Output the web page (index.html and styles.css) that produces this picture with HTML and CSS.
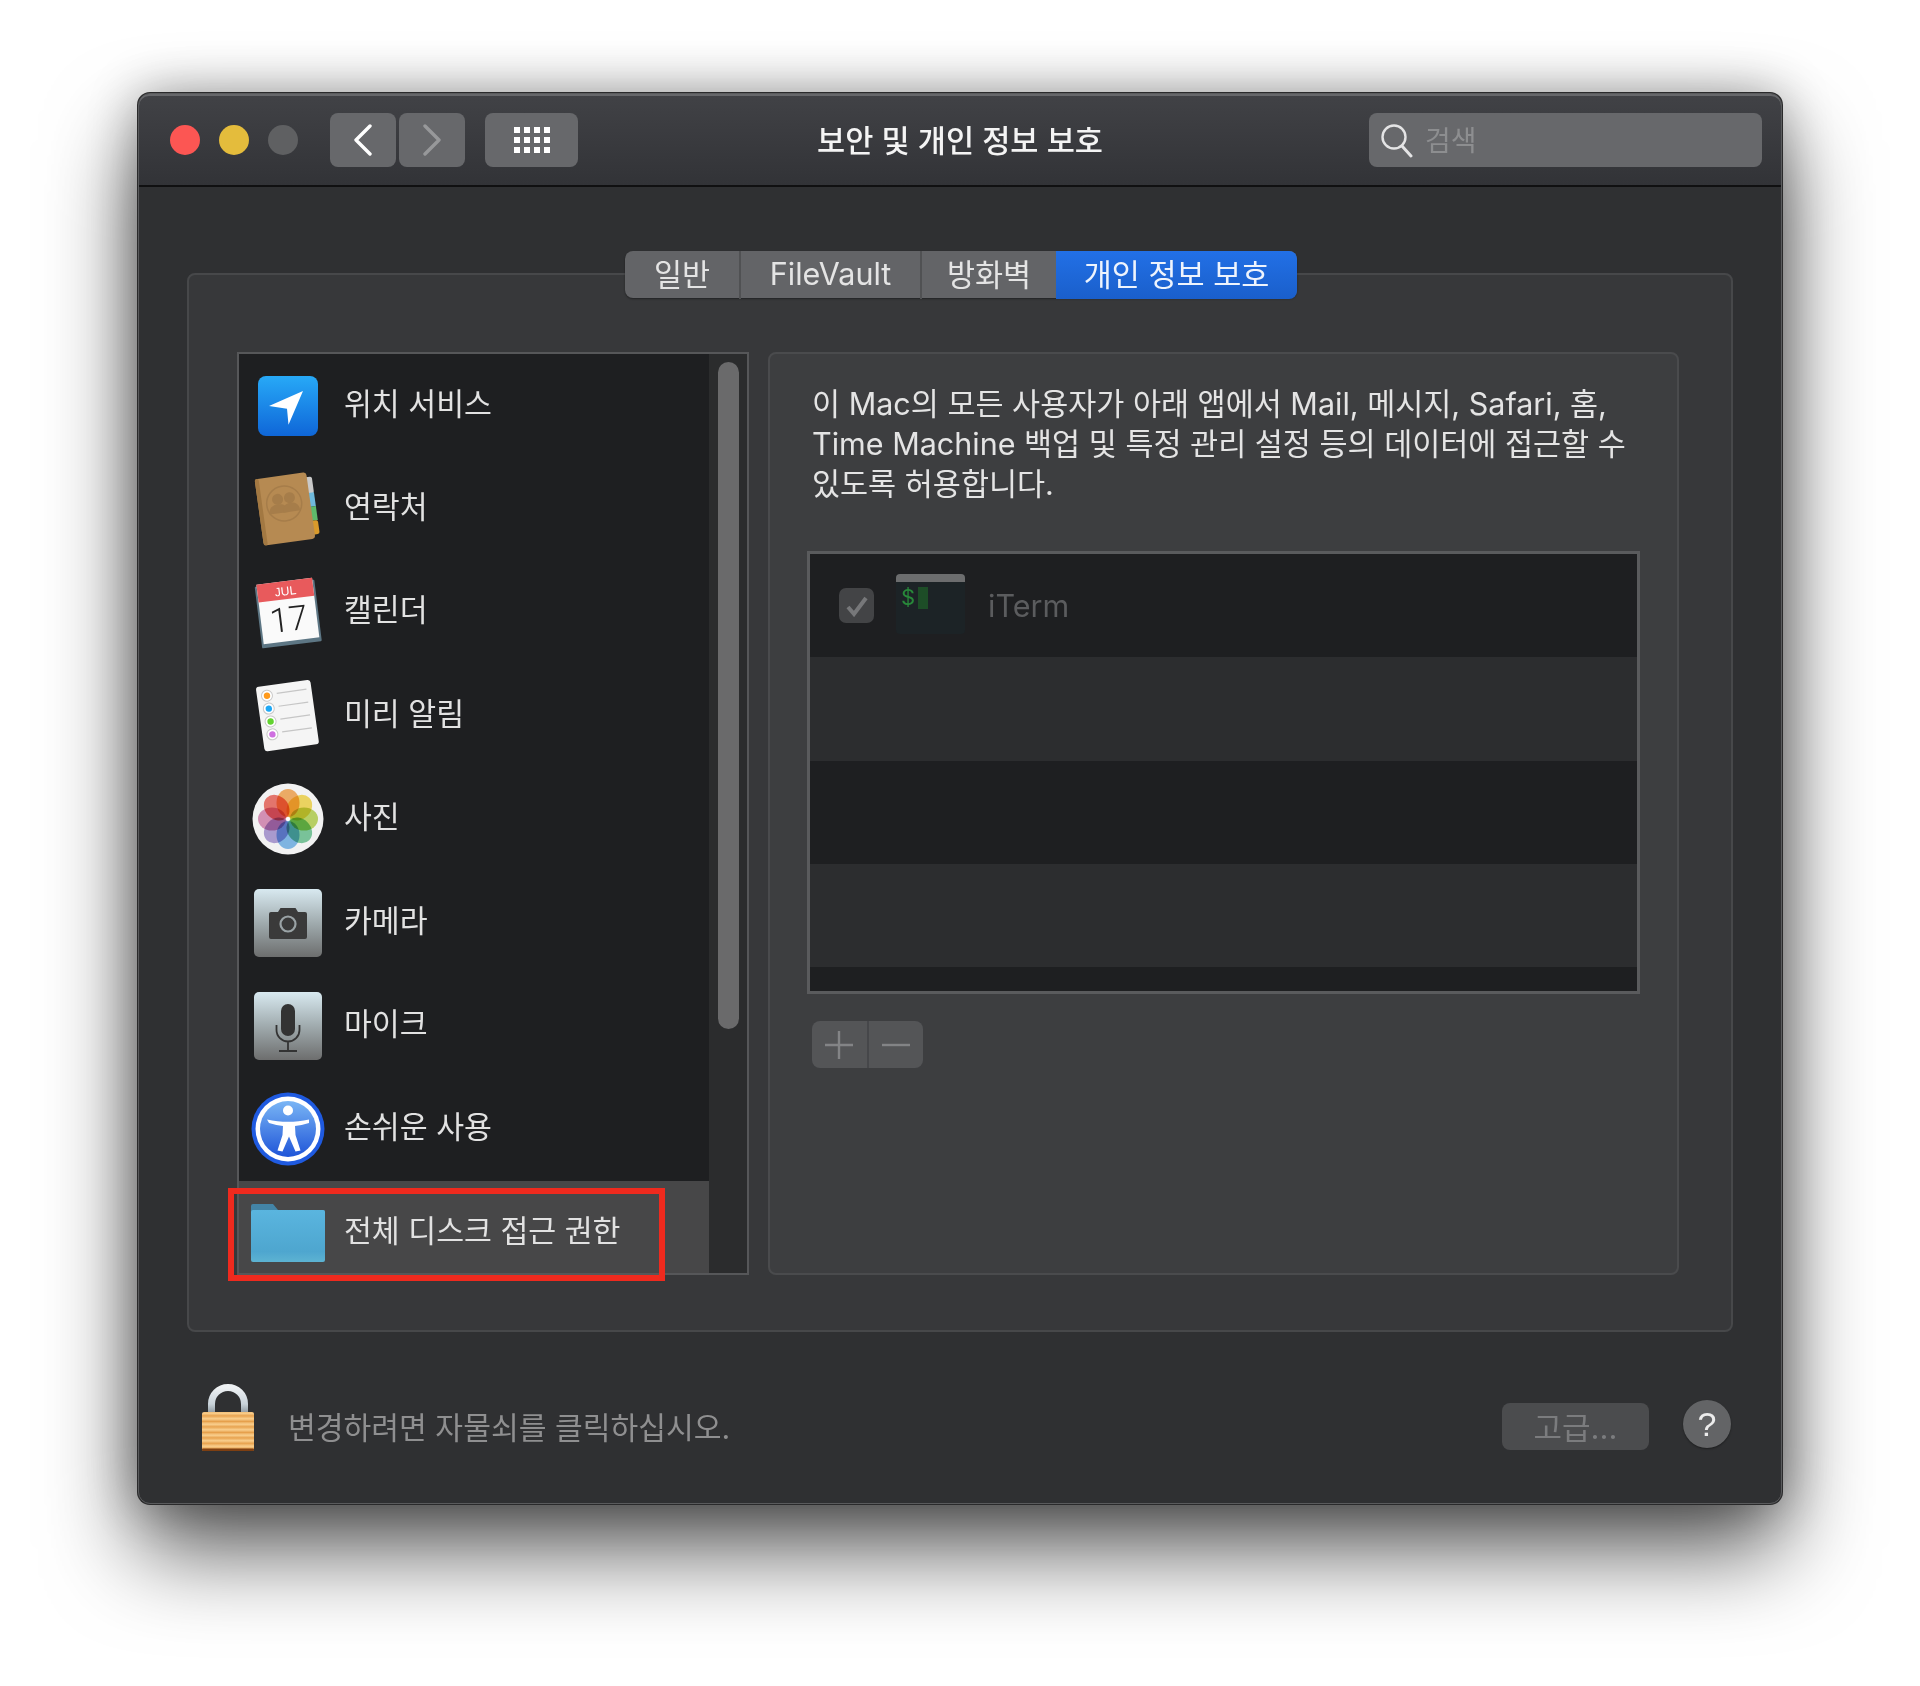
FILE: index.html
```html
<!DOCTYPE html>
<html lang="ko">
<head>
    <meta charset="UTF-8">
    <meta name="viewport" content="width=device-width, initial-scale=1.0">
    <title>보안 및 개인 정보 보호</title>
    <link rel="stylesheet" href="styles.css">
</head>
<body>
    <div class="window">
        <header class="titlebar">
            <div class="lights">
                <span class="light red"></span>
                <span class="light yellow"></span>
                <span class="light gray"></span>
            </div>
            <div class="nav">
                <button class="tool-btn nav-btn">
                    <svg width="20" height="32" viewBox="0 0 20 32"><path d="M17 2 3 16l14 14" fill="none" stroke="#fff" stroke-width="3.4" stroke-linecap="round" stroke-linejoin="round"/></svg>
                </button>
                <button class="tool-btn nav-btn">
                    <svg width="20" height="32" viewBox="0 0 20 32"><path d="M3 2l14 14L3 30" fill="none" stroke="#97989a" stroke-width="3.4" stroke-linecap="round" stroke-linejoin="round"/></svg>
                </button>
            </div>
            <button class="tool-btn grid-btn">
                <svg width="36" height="26" viewBox="0 0 36 26" fill="#fff">
                    <rect x="0" y="0" width="6" height="6"/><rect x="10" y="0" width="6" height="6"/><rect x="20" y="0" width="6" height="6"/><rect x="30" y="0" width="6" height="6"/>
                    <rect x="0" y="10" width="6" height="6"/><rect x="10" y="10" width="6" height="6"/><rect x="20" y="10" width="6" height="6"/><rect x="30" y="10" width="6" height="6"/>
                    <rect x="0" y="20" width="6" height="6"/><rect x="10" y="20" width="6" height="6"/><rect x="20" y="20" width="6" height="6"/><rect x="30" y="20" width="6" height="6"/>
                </svg>
            </button>
            <h1 class="title">보안 및 개인 정보 보호</h1>
            <div class="search">
                <svg width="34" height="36" viewBox="0 0 34 36"><circle cx="14" cy="15" r="11.5" fill="none" stroke="#e4e4e5" stroke-width="2.4"/><path d="M22 24l9 10" stroke="#e4e4e5" stroke-width="3" stroke-linecap="round"/></svg>
                <span>검색</span>
            </div>
        </header>

        <main class="content">
            <section class="box">
                <nav class="tabs">
                    <a class="tab">일반</a>
                    <a class="tab">FileVault</a>
                    <a class="tab">방화벽</a>
                    <a class="tab active">개인 정보 보호</a>
                </nav>

                <div class="columns">
                    <div class="list-wrap">
                        <div class="list">
                            <ul class="rows">
                                <li class="row">
                                    <svg class="app-icon" viewBox="0 0 76 76">
                                        <defs><linearGradient id="locBg" x1="0" y1="0" x2="0" y2="1"><stop offset="0" stop-color="#27a9f7"/><stop offset="1" stop-color="#0f66d8"/></linearGradient></defs>
                                        <rect x="8" y="8" width="60" height="60" rx="8" fill="url(#locBg)"/>
                                        <path d="M53 23 19 38l18 2.700 1.500 16z" fill="#fff"/>
                                    </svg>
                                    <span>위치 서비스</span>
                                </li>
                                <li class="row">
                                    <svg class="app-icon" viewBox="0 0 76 76">
                                        <g transform="rotate(-8 38 38)">
                                            <rect x="58" y="9" width="8" height="17" rx="2" fill="#c9c9c9"/>
                                            <rect x="58" y="25" width="8" height="14" fill="#6fb9dc"/>
                                            <rect x="58" y="39" width="8" height="14" fill="#5dbb6b"/>
                                            <rect x="58" y="53" width="8" height="14" rx="2" fill="#d99a2b"/>
                                            <rect x="9" y="4" width="52" height="67" rx="3" fill="#b68a52"/>
                                            <rect x="9" y="4" width="4" height="67" rx="2" fill="#a27842"/>
                                            <circle cx="35" cy="32" r="17.500" fill="none" stroke="#a67d4a" stroke-width="1.500"/>
                                            <g fill="#a67d4a">
                                                <circle cx="29" cy="27" r="5.500"/><path d="M19 41c0-7 5-9 10-9s9 2 9 9z"/>
                                                <circle cx="41" cy="27" r="5.500"/><path d="M33 41c0-7 4-9 8-9s9 2 9 9z"/>
                                            </g>
                                        </g>
                                    </svg>
                                    <span>연락처</span>
                                </li>
                                <li class="row">
                                    <svg class="app-icon" viewBox="0 0 76 76">
                                        <g transform="rotate(-7 38 38)">
                                            <rect x="8" y="9" width="60" height="62" rx="1" fill="#5d7684"/>
                                            <rect x="10" y="7" width="56" height="60" fill="#fafafa"/>
                                            <rect x="10" y="7" width="56" height="18" fill="#e85a5c"/>
                                            <text class="cal-month" x="38" y="21" text-anchor="middle">JUL</text>
                                            <text class="cal-day" x="38" y="57" text-anchor="middle">17</text>
                                        </g>
                                    </svg>
                                    <span>캘린더</span>
                                </li>
                                <li class="row">
                                    <svg class="app-icon" viewBox="0 0 76 76">
                                        <g transform="rotate(-8 38 38)">
                                            <rect x="10" y="5" width="55" height="65" rx="3" fill="#f5f5f5"/>
                                            <g stroke="#c6c6c6" stroke-width="1.200">
                                                <path d="M30 14h30M30 27h30M30 40h30M30 53h30"/>
                                            </g>
                                            <g stroke="#c8c8c8" stroke-width="1" fill="#fff">
                                                <circle cx="20" cy="15" r="5.500"/><circle cx="20" cy="28" r="5.500"/><circle cx="20" cy="41" r="5.500"/><circle cx="20" cy="54" r="5.500"/>
                                            </g>
                                            <circle cx="20" cy="15" r="3.200" fill="#ff9a1c"/>
                                            <circle cx="20" cy="28" r="3.200" fill="#1ea8f5"/>
                                            <circle cx="20" cy="41" r="3.200" fill="#62d330"/>
                                            <circle cx="20" cy="54" r="3.200" fill="#cf6fe0"/>
                                        </g>
                                    </svg>
                                    <span>미리 알림</span>
                                </li>
                                <li class="row">
                                    <svg class="app-icon" viewBox="0 0 76 76">
                                        <circle cx="38" cy="38" r="35.500" fill="#f2f2f2"/>
                                        <ellipse class="petal" cx="38" cy="22" rx="11.500" ry="14" fill="#f7a650"/>
                                        <ellipse class="petal" cx="38" cy="22" rx="11.500" ry="14" fill="#f6d84a" transform="rotate(45 38 38)"/>
                                        <ellipse class="petal" cx="38" cy="22" rx="11.500" ry="14" fill="#b6d44e" transform="rotate(90 38 38)"/>
                                        <ellipse class="petal" cx="38" cy="22" rx="11.500" ry="14" fill="#69c490" transform="rotate(135 38 38)"/>
                                        <ellipse class="petal" cx="38" cy="22" rx="11.500" ry="14" fill="#70b3ea" transform="rotate(180 38 38)"/>
                                        <ellipse class="petal" cx="38" cy="22" rx="11.500" ry="14" fill="#a592d3" transform="rotate(225 38 38)"/>
                                        <ellipse class="petal" cx="38" cy="22" rx="11.500" ry="14" fill="#d885b3" transform="rotate(270 38 38)"/>
                                        <ellipse class="petal" cx="38" cy="22" rx="11.500" ry="14" fill="#ee6459" transform="rotate(315 38 38)"/>
                                        <circle cx="38" cy="38" r="1.800" fill="#fff"/>
                                    </svg>
                                    <span>사진</span>
                                </li>
                                <li class="row">
                                    <svg class="app-icon" viewBox="0 0 76 76">
                                        <defs><linearGradient id="metal" x1="0" y1="0" x2="0" y2="1"><stop offset="0" stop-color="#d8e9f0"/><stop offset="0.500" stop-color="#a0abae"/><stop offset="1" stop-color="#6d6e6e"/></linearGradient></defs>
                                        <rect x="4" y="4" width="68" height="68" rx="5" fill="url(#metal)"/>
                                        <path d="M21 27h7l2.500-4h15l2.500 4h7a2 2 0 0 1 2 2v23a2 2 0 0 1-2 2H21a2 2 0 0 1-2-2V29a2 2 0 0 1 2-2z" fill="#3a3a3a"/>
                                        <circle cx="38" cy="39" r="7.500" fill="none" stroke="#9aa3a6" stroke-width="2.200"/>
                                    </svg>
                                    <span>카메라</span>
                                </li>
                                <li class="row">
                                    <svg class="app-icon" viewBox="0 0 76 76">
                                        <rect x="4" y="4" width="68" height="68" rx="5" fill="url(#metal)"/>
                                        <rect x="31" y="16" width="14" height="32" rx="7" fill="#333"/>
                                        <path d="M26.500 37v5a11.500 11.500 0 0 0 23 0v-5M38 54v9M29 63h18" fill="none" stroke="#333" stroke-width="1.800"/>
                                    </svg>
                                    <span>마이크</span>
                                </li>
                                <li class="row">
                                    <svg class="app-icon" viewBox="0 0 76 76">
                                        <defs><linearGradient id="accBg" x1="0" y1="0" x2="0" y2="1"><stop offset="0" stop-color="#79b5f5"/><stop offset="1" stop-color="#1f55d8"/></linearGradient></defs>
                                        <circle cx="38" cy="38" r="36.500" fill="#1f5ae0"/>
                                        <circle cx="38" cy="38" r="32.500" fill="#fff"/>
                                        <circle cx="38" cy="38" r="28" fill="url(#accBg)"/>
                                        <circle cx="38" cy="19.500" r="5" fill="#fff"/>
                                        <path d="M17 28.500c7 1.500 14 2.300 21 2.300s14-.8 21-2.300v3.500c-5 1.500-10 2.500-14 3l.5 9 5 15.500-5 1-6.500-15-6.500 15-5-1 5-15.500.5-9c-4-.5-9-1.500-14-3z" fill="#fff"/>
                                    </svg>
                                    <span>손쉬운 사용</span>
                                </li>
                                <li class="row selected">
                                    <svg class="app-icon" viewBox="0 0 76 76">
                                        <defs><linearGradient id="folderBg" x1="0" y1="0" x2="0" y2="1"><stop offset="0" stop-color="#5ab5df"/><stop offset="0.800" stop-color="#4ea6cf"/><stop offset="1" stop-color="#5db3d2"/></linearGradient></defs>
                                        <path d="M1 11a2 2 0 0 1 2-2h20l5 6h45a2 2 0 0 1 2 2v10H1z" fill="#4384a6"/>
                                        <rect x="1" y="15" width="74" height="52" rx="2" fill="url(#folderBg)"/>
                                    </svg>
                                    <span>전체 디스크 접근 권한</span>
                                </li>
                            </ul>
                            <div class="scroll-track"><div class="scroll-thumb"></div></div>
                        </div>
                        <div class="highlight"></div>
                    </div>

                    <div class="panel">
                        <p class="desc">이 Mac의 모든 사용자가 아래 앱에서 Mail, 메시지, Safari, 홈,<br>Time Machine 백업 및 특정 관리 설정 등의 데이터에 접근할 수<br>있도록 허용합니다.</p>
                        <div class="table">
                            <div class="table-row dark">
                                <span class="check">
                                    <svg width="24" height="22" viewBox="0 0 24 22"><path d="M3 12l6 7L21 3" fill="none" stroke="#77787a" stroke-width="4"/></svg>
                                </span>
                                <div class="term-icon"><span class="term-bar"></span><span class="term-line">$<i class="term-cursor"></i></span></div>
                                <span class="app-name">iTerm</span>
                            </div>
                            <div class="table-row"></div>
                            <div class="table-row dark"></div>
                            <div class="table-row"></div>
                            <div class="table-row dark last"></div>
                        </div>
                        <div class="plus-minus">
                            <button class="pm-btn"><svg width="28" height="28" viewBox="0 0 28 28"><path d="M14 0v28M0 14h28" stroke="#838486" stroke-width="2.400"/></svg></button>
                            <button class="pm-btn"><svg width="28" height="28" viewBox="0 0 28 28"><path d="M0 14h28" stroke="#838486" stroke-width="2.400"/></svg></button>
                        </div>
                    </div>
                </div>
            </section>

            <footer class="footer">
                <svg class="lock" width="52" height="68" viewBox="0 0 52 68">
                    <defs>
                        <linearGradient id="shackle" x1="0" y1="0" x2="0" y2="1"><stop offset="0" stop-color="#eef1f3"/><stop offset="0.600" stop-color="#c9d3da"/><stop offset="1" stop-color="#7f8a92"/></linearGradient>
                        <linearGradient id="stripes" x1="0" y1="0" x2="0" y2="5.500" gradientUnits="userSpaceOnUse" spreadMethod="repeat"><stop offset="0" stop-color="#e9a552"/><stop offset="0.500" stop-color="#f9cf8e"/><stop offset="1" stop-color="#e6a04c"/></linearGradient>
                    </defs>
                    <path d="M9.500 32V21a16.500 16.500 0 0 1 33 0v11" fill="none" stroke="url(#shackle)" stroke-width="7"/>
                    <rect y="29" width="52" height="39" rx="2" fill="url(#stripes)"/>
                    <rect y="65.500" width="52" height="2.500" rx="1" fill="#7e3f12"/>
                </svg>
                <span class="lock-text">변경하려면 자물쇠를 클릭하십시오.</span>
                <button class="adv-btn">고급...</button>
                <button class="help-btn">?</button>
            </footer>
        </main>
    </div>
</body>
</html>
```
FILE: styles.css
```css
* {
    box-sizing: border-box;
}
body {
    height: 1686px;
    margin: 0;
    padding: 93px 0 0 138px;
    background-color: #fff;
    font-family: Inter, "Noto Sans CJK KR", sans-serif;
}
button {
    border: none;
    padding: 0;
    font-family: inherit;
}
.window {
    display: flex;
    flex-direction: column;
    width: 1644px;
    height: 1411px;
    background-color: #2f3032;
    border: 1px solid #5a5b5d;
    border-radius: 12px;
    box-shadow: 0 0 0 1px #2a2a2b, 0 46px 90px rgba(0,0,0,0.66), 0 0 50px rgba(0,0,0,0.32);
}
.titlebar {
    display: flex;
    align-items: center;
    height: 93px;
    padding: 0 19px 0 31px;
    background: linear-gradient(#414246, #323337);
    border-bottom: 2px solid #101011;
    border-radius: 10px 10px 0 0;
    box-shadow: inset 0 2px 0 #66676a;
}
.lights {
    display: flex;
    gap: 19px;
}
.light {
    width: 30px;
    height: 30px;
    border-radius: 50%;
}
.light.red { background-color: #fc5653; }
.light.yellow { background-color: #e4bc3c; }
.light.gray { background-color: #5f6062; }
.tool-btn {
    display: flex;
    align-items: center;
    justify-content: center;
    height: 54px;
    background-color: #67686b;
    border-radius: 8px;
}
.nav {
    display: flex;
    gap: 3px;
    margin-left: 32px;
}
.nav-btn {
    width: 66px;
}
.grid-btn {
    width: 93px;
    margin-left: 20px;
}
.title {
    flex: 1;
    margin: 0 0 2px;
    padding-right: 27px;
    text-align: center;
    font-size: 30.6px;
    font-weight: 500;
    color: #f4f4f4;
}
.search {
    display: flex;
    align-items: center;
    gap: 11px;
    width: 393px;
    height: 54px;
    padding-left: 11px;
    background-color: #67686b;
    border-radius: 8px;
    font-size: 28px;
    color: #8d8e90;
}
.search span {
    margin-bottom: 2px;
}
.content {
    flex: 1;
    display: flex;
    flex-direction: column;
    padding: 86px 48px 0;
}
.box {
    height: 1059px;
    padding: 0 48px;
    background-color: #37383a;
    border: 2px solid #47484a;
    border-radius: 8px;
}
.tabs {
    display: grid;
    grid-template-columns: 114px 181px 136px 241px;
    width: 672px;
    height: 47px;
    margin: -24px 0 0 388px;
    background-color: #636467;
    border-radius: 8px;
    box-shadow: 0 1px 2px rgba(0,0,0,0.4);
    font-size: 30.5px;
    color: #e4e4e4;
}
.tab {
    display: flex;
    align-items: center;
    justify-content: center;
    padding-bottom: 4px;
    border-left: 2px solid #505153;
}
.tab:first-child {
    border-left: none;
}
.tab.active {
    border-left: none;
    border-radius: 0 8px 8px 0;
    background: linear-gradient(#2270e6, #1a5fcb);
    color: #eef4fd;
}
.columns {
    display: flex;
    gap: 19px;
    margin-top: 54px;
}
.list-wrap {
    position: relative;
    width: 512px;
    height: 923px;
}
.list {
    display: flex;
    height: 100%;
    background-color: #1e1f21;
    border: 2px solid #565759;
    overflow: hidden;
}
.rows {
    flex: 1;
    margin: 0;
    padding: 0;
    list-style: none;
}
.row {
    display: flex;
    align-items: center;
    gap: 18px;
    height: 103.4px;
    padding-left: 11px;
    font-size: 30.3px;
    color: #e2e2e2;
}
.row span {
    margin-top: -8px;
}
.row.selected {
    background-color: #474748;
}
.app-icon {
    flex-shrink: 0;
    width: 76px;
    height: 76px;
}
.cal-month {
    font-family: "Liberation Sans", sans-serif;
    font-size: 12px;
    fill: #fff;
}
.cal-day {
    font-family: Roboto, sans-serif;
    font-weight: 300;
    font-size: 34px;
    fill: #222;
}
.petal {
    mix-blend-mode: multiply;
    opacity: 0.85;
}
.scroll-track {
    width: 38px;
    padding: 8px 8px 0 9px;
    background-color: #2b2c2d;
}
.scroll-thumb {
    height: 667px;
    background-color: #6a6a6b;
    border-radius: 11px;
}
.highlight {
    position: absolute;
    left: -9px;
    top: 836px;
    width: 437px;
    height: 93px;
    border: 6px solid #ef2a1e;
}
.panel {
    width: 911px;
    height: 923px;
    padding: 0 37px;
    background-color: #3d3e40;
    border: 2px solid #4a4b4d;
    border-radius: 8px;
}
.desc {
    margin: 30px 0 0 5px;
    font-size: 30.5px;
    line-height: 40px;
    color: #e4e4e4;
    white-space: nowrap;
}
.table {
    display: grid;
    grid-template-rows: repeat(4, 103.3px) 1fr;
    width: 833px;
    height: 443px;
    margin-top: 47px;
    border: 3px solid #5a5b5d;
}
.table-row {
    display: flex;
    align-items: center;
    padding-left: 29px;
    background-color: #2c2d2f;
}
.table-row.dark {
    background-color: #1e1f21;
}
.check {
    display: flex;
    align-items: center;
    justify-content: center;
    width: 35px;
    height: 35px;
    background-color: #434446;
    border-radius: 7px;
}
.term-icon {
    display: flex;
    flex-direction: column;
    width: 69px;
    height: 60px;
    margin: -4px 0 0 22px;
    background-color: #1c2326;
    border-radius: 4px;
}
.term-bar {
    height: 8px;
    background-color: #6c6d6e;
    border-radius: 4px 4px 0 0;
}
.term-line {
    display: flex;
    align-items: flex-start;
    gap: 3px;
    padding: 2px 0 0 5px;
    font-size: 22px;
    line-height: 26px;
    color: #28893a;
}
.term-cursor {
    width: 10px;
    height: 22px;
    margin-top: 3px;
    background-color: #1d4d27;
}
.app-name {
    margin-left: 23px;
    font-size: 30.5px;
    color: #5b5c5e;
}
.plus-minus {
    display: flex;
    width: 111px;
    height: 47px;
    margin: 27px 0 0 5px;
    background-color: #545557;
    border-radius: 8px;
}
.pm-btn {
    display: flex;
    align-items: center;
    justify-content: center;
    flex: 1;
    background: none;
}
.pm-btn + .pm-btn {
    border-left: 2px solid #46474a;
}
.footer {
    flex: 1;
    display: flex;
    align-items: flex-end;
    padding: 0 2px 52px 15px;
}
.lock-text {
    margin: 0 0 3px 34px;
    font-size: 30.2px;
    color: #8f8f90;
}
.adv-btn {
    width: 147px;
    height: 47px;
    margin: 0 34px 1px auto;
    padding-bottom: 7px;
    background-color: #4b4c4e;
    border-radius: 8px;
    font-size: 31px;
    color: #7b7c7e;
}
.help-btn {
    width: 48px;
    height: 48px;
    margin-bottom: 3px;
    background-color: #636466;
    border-radius: 50%;
    box-shadow: 0 1px 2px rgba(0,0,0,0.4);
    font-family: "Liberation Sans", sans-serif;
    font-size: 34px;
    color: #ececec;
}
```
